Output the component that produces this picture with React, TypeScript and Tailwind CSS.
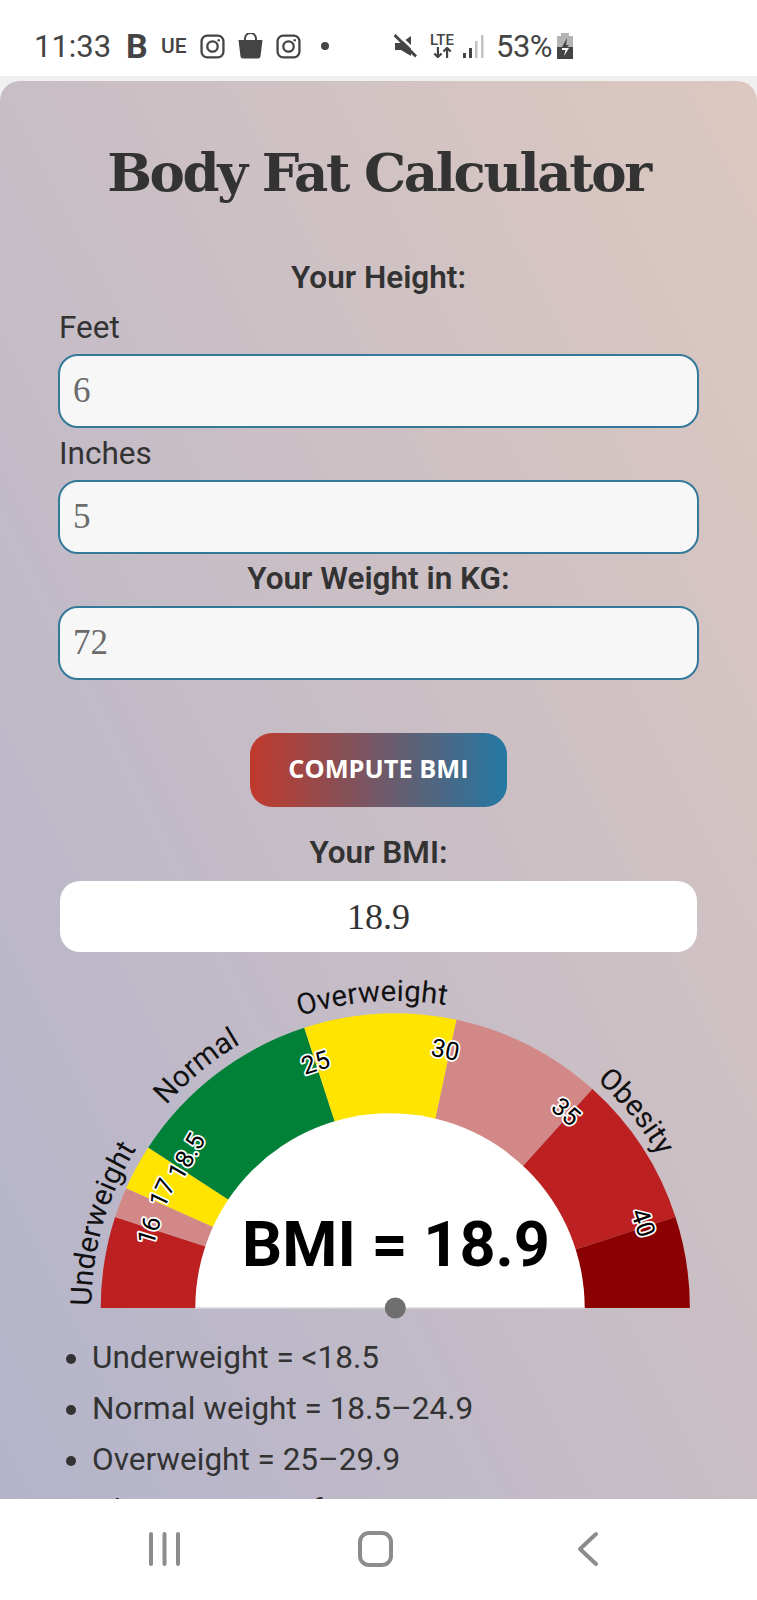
const CX = 395.3;
const CY = 1307;
const OUTER_R = 294.6;
const INNER_R = 194.7;

// angle is measured from the left end of the gauge, clockwise, in degrees
function polar(angle: number, r: number) {
  const a = (angle * Math.PI) / 180;
  return [CX - r * Math.cos(a), CY - r * Math.sin(a)];
}

// segments run under the white disc, which sits a little left of their centre
function arcPath(from: number, to: number) {
  const [x1, y1] = polar(from, OUTER_R);
  const [x2, y2] = polar(to, OUTER_R);
  const [x3, y3] = polar(to, 150);
  const [x4, y4] = polar(from, 150);
  return `M${x1} ${y1}A${OUTER_R} ${OUTER_R} 0 0 1 ${x2} ${y2}L${x3} ${y3}L${x4} ${y4}Z`;
}

function curve(from: number, to: number, r: number) {
  const [x1, y1] = polar(from, r);
  const [x2, y2] = polar(to, r);
  return `M${x1} ${y1}A${r} ${r} 0 0 1 ${x2} ${y2}`;
}

const segments = [
  { from: 0, to: 18, color: '#bc2020' },
  { from: 18, to: 24, color: '#d38888' },
  { from: 24, to: 33, color: '#ffe400' },
  { from: 33, to: 72, color: '#008137' },
  { from: 72, to: 102, color: '#ffe400' },
  { from: 102, to: 132, color: '#d38888' },
  { from: 132, to: 162, color: '#bc2020' },
  { from: 162, to: 180, color: '#8b0000' },
];

const ticks = [
  { text: '16', angle: 17.5, r: 258, rotate: -73 },
  { text: '17', angle: 26.3, r: 260, rotate: -65 },
  { text: '18.5', angle: 36, r: 258, rotate: -60 },
  { text: '25', angle: 72, r: 258, rotate: -18 },
  { text: '30', angle: 101, r: 263, rotate: 11 },
  { text: '35', angle: 131, r: 260, rotate: 41 },
  { text: '40', angle: 161, r: 262, rotate: 71 },
];

const arcLabels = [
  { id: 'underweight', text: 'Underweight', from: 0.4, to: 40, r: 304 },
  { id: 'normal', text: 'Normal', from: 41.5, to: 70, r: 306 },
  { id: 'overweight', text: 'Overweight', from: 71.9, to: 110, r: 307 },
  { id: 'obesity', text: 'Obesity', from: 131.5, to: 165, r: 304 },
];

function Gauge() {
  return (
    <svg viewBox="0 970 757 350" className="block w-[757px] h-[350px] -mx-[59px] mt-[19px] font-['Roboto',sans-serif]">
      {segments.map((s) => (
        <path key={s.from} d={arcPath(s.from, s.to)} fill={s.color} />
      ))}
      <path d={`M195.3 1307A${INNER_R} ${INNER_R} 0 0 1 584.7 1307Z`} fill="#ffffff" />
      <line x1="195.3" y1="1307" x2="584.7" y2="1307" stroke="#d8d8d8" strokeWidth="1.5" />

      {arcLabels.map((l) => (
        <g key={l.id}>
          <path id={l.id} d={curve(l.from, l.to, l.r)} fill="none" />
          <text fontSize="29.5" fill="#111111">
            <textPath href={`#${l.id}`}>{l.text}</textPath>
          </text>
        </g>
      ))}

      {ticks.map((t) => {
        const [x, y] = polar(t.angle, t.r);
        return (
          <text
            key={t.text}
            x={x}
            y={y}
            fontSize="25"
            textAnchor="middle"
            dominantBaseline="central"
            fill="#000000"
            stroke="#ffffff"
            strokeWidth="3.5"
            strokeLinejoin="round"
            transform={`rotate(${t.rotate} ${x} ${y})`}
            className="[paint-order:stroke]"
          >
            {t.text}
          </text>
        );
      })}

      <text x="396" y="1265" fontSize="63" fontWeight="700" textAnchor="middle" fill="#000000">
        BMI = 18.9
      </text>
      <circle cx="395.3" cy="1307" r="10.5" fill="#6f6f6f" />
    </svg>
  );
}

function InstagramIcon() {
  return (
    <svg viewBox="0 0 24 24" className="w-[25px] h-[25px]" fill="none" stroke="#444444" strokeWidth="2.2">
      <rect x="1.500" y="1.500" width="21" height="21" rx="5.500" />
      <circle cx="12" cy="12" r="5" />
      <circle cx="18" cy="6" r="1.200" fill="#444444" stroke="none" />
    </svg>
  );
}

function StatusBar() {
  return (
    <div className="h-[76px] shrink-0 bg-white flex items-center pl-[34px] pt-[16px] text-[#444444]">
      <span className="text-[31px] leading-none w-[92px]">11:33</span>
      <span className="text-[34px] leading-none font-bold w-[35px]">B</span>
      <span className="text-[21px] leading-none font-medium w-[39px]">UE</span>
      <InstagramIcon />
      <svg viewBox="0 0 25 26" className="w-[25px] h-[26px] ml-[13px]" fill="#444444">
        <path d="M7 8V5.500a5.500 5.500 0 0 1 11 0V8" fill="none" stroke="#444444" strokeWidth="2" />
        <path d="M0.500 7h24l-2 16.500a2.500 2.500 0 0 1-2.500 2h-15a2.500 2.500 0 0 1-2.500-2z" />
      </svg>
      <div className="ml-[13px]">
        <InstagramIcon />
      </div>
      <div className="w-[8px] h-[8px] rounded-full bg-[#444444] ml-[20px]" />
      <svg viewBox="0 0 24 24" className="w-[24px] h-[24px] ml-[65px]" fill="#444444">
        <path d="M1 9h6l10-7v20L7 16H1z" />
        <path d="M2.500 -1L24.500 20" stroke="#ffffff" strokeWidth="2.500" />
        <path d="M0.500 1L22 22.500" stroke="#444444" strokeWidth="3" />
      </svg>
      <div className="ml-[11px] w-[26px] flex flex-col items-center">
        <span className="text-[15px] leading-[13px] font-medium">LTE</span>
        <svg viewBox="0 0 22 12" className="w-[21px] h-[11px]" fill="none" stroke="#444444" strokeWidth="2.400">
          <path d="M6 0v11M2 7l4 4 4-4M16 12V1M12 5l4-4 4 4" />
        </svg>
      </div>
      <svg viewBox="0 0 22 26" className="w-[22px] h-[26px] ml-[7px]">
        <rect x="1" y="20" width="3" height="5" fill="#444444" />
        <rect x="7" y="15" width="3" height="10" fill="#444444" />
        <rect x="13" y="8" width="2.500" height="17" fill="#c2c2c2" />
        <rect x="19" y="2" width="2.500" height="23" fill="#c2c2c2" />
      </svg>
      <span className="text-[31px] leading-none ml-[12px] w-[61px] tracking-[-0.5px]">53%</span>
      <svg viewBox="0 0 16 26" className="w-[16px] h-[26px]">
        <rect x="0" y="3" width="16" height="23" fill="#b4b4b4" />
        <rect x="4" y="0" width="8" height="3" fill="#b4b4b4" />
        <rect x="0" y="14" width="16" height="12" fill="#444444" />
        <path d="M10 5L5 14h5l2-2H9z" fill="#444444" />
        <path d="M5 15h7l-5 8 1.500-6H5z" fill="#ffffff" />
      </svg>
    </div>
  );
}

function NavBar() {
  return (
    <div className="h-[101px] shrink-0 bg-white flex items-center justify-center pb-[2px]">
      <svg viewBox="0 0 757 40" className="w-[757px] h-[40px]" fill="none" stroke="#8c8c8c" strokeWidth="4" strokeLinecap="round" strokeLinejoin="round">
        <path d="M151 5v30M164.500 5v30M178 5v30" />
        <rect x="360" y="4" width="31" height="32" rx="9" />
        <path d="M596 5l-16 15 16 15" />
      </svg>
    </div>
  );
}

function Field({ value }: { value: string }) {
  return (
    <input
      readOnly
      value={value}
      className="block -mx-[1px] w-[calc(100%+2px)] h-[74px] px-[13px] rounded-[20px] border-[2.500px] border-[#35799a] bg-[#f7f7f7] text-[35px] text-[#6b6b6b] font-['Liberation_Serif',serif] outline-none"
    />
  );
}

export default function App() {
  return (
    <div className="w-[757px] h-[1600px] flex flex-col overflow-hidden font-['Roboto',sans-serif]">
      <StatusBar />
      <div className="flex-1 min-h-0 overflow-hidden bg-[#f0f0f0] pt-[5px]">
        <div className="h-[1500px] rounded-t-[20px] bg-[linear-gradient(to_top_right,#b2b3cb,#ddc8c0)] px-[59px] pt-[61px] text-[#333333]">
          <h1 className="h-[60px] leading-[60px] text-center text-[53px] font-bold font-['DejaVu_Serif',serif] tracking-[-2.400px] whitespace-nowrap">
            Body Fat Calculator
          </h1>
          <h2 className="mt-[58px] h-[36px] leading-[36px] text-center text-[31.500px] font-semibold">Your Height:</h2>
          <label className="block mt-[14px] h-[36px] leading-[36px] text-[31.500px]">Feet</label>
          <div className="mt-[8px]">
            <Field value="6" />
          </div>
          <label className="block mt-[8px] h-[36px] leading-[36px] text-[31.500px]">Inches</label>
          <div className="mt-[8px]">
            <Field value="5" />
          </div>
          <h2 className="mt-[7px] h-[36px] leading-[36px] text-center text-[31.500px] font-semibold">Your Weight in KG:</h2>
          <div className="mt-[9px]">
            <Field value="72" />
          </div>
          <button className="block mx-auto mt-[53px] w-[257px] h-[74px] pb-[3px] rounded-[22px] bg-[linear-gradient(to_right,#c0392b,#2478a3)] text-white text-[25.400px] font-bold font-['Open_Sans',sans-serif]">
            COMPUTE BMI
          </button>
          <h2 className="mt-[28px] h-[36px] leading-[36px] text-center text-[31.500px] font-semibold">Your BMI:</h2>
          <div className="mt-[10px] mx-[1px] h-[71px] rounded-[20px] bg-white flex items-center justify-center text-[36px] font-['Liberation_Serif',serif]">
            18.9
          </div>
          <Gauge />
          <ul className="mt-[11px] pl-[33px] list-disc text-[31.500px] leading-[51px] text-[#333333] whitespace-nowrap">
            <li>Underweight = &lt;18.5</li>
            <li>Normal weight = 18.5–24.9</li>
            <li>Overweight = 25–29.9</li>
            <li>Obesity = BMI of 30</li>
          </ul>
        </div>
      </div>
      <NavBar />
    </div>
  );
}
